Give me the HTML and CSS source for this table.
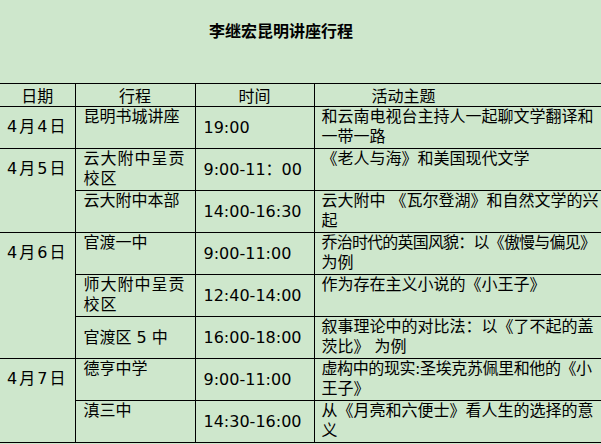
FILE: index.html
```html
<!DOCTYPE html>
<html lang="zh-CN">
<head>
<meta charset="utf-8">
<title>李继宏昆明讲座行程</title>
<link rel="stylesheet" href="styles.css">
</head>
<body>
<div class="page">
  <div class="title">李继宏昆明讲座行程</div>
  <table class="sched">
    <colgroup>
      <col class="c-date">
      <col class="c-place">
      <col class="c-time">
      <col class="c-topic">
    </colgroup>
    <tr class="head">
      <td class="h">日期</td>
      <td class="h">行程</td>
      <td class="h">时间</td>
      <td class="h h-topic">活动主题</td>
    </tr>
    <tr class="row">
      <td class="date"><div class="date-in">4月4日</div></td>
      <td class="place">昆明书城讲座</td>
      <td class="time">19:00</td>
      <td class="topic">和云南电视台主持人一起聊文学翻译和<br>一带一路</td>
    </tr>
    <tr class="row">
      <td class="date" rowspan="2"><div class="date-in">4月5日</div></td>
      <td class="place wide">云大附中呈贡<br>校区</td>
      <td class="time">9:00-11：00</td>
      <td class="topic">《老人与海》和美国现代文学</td>
    </tr>
    <tr class="row">
      <td class="place">云大附中本部</td>
      <td class="time">14:00-16:30</td>
      <td class="topic">云大附中 《瓦尔登湖》和自然文学的兴<br>起</td>
    </tr>
    <tr class="row">
      <td class="date" rowspan="3"><div class="date-in">4月6日</div></td>
      <td class="place">官渡一中</td>
      <td class="time">9:00-11:00</td>
      <td class="topic"><span class="tight">乔治时代的英国风貌：以《傲慢与偏见》</span><br>为例</td>
    </tr>
    <tr class="row">
      <td class="place wide">师大附中呈贡<br>校区</td>
      <td class="time">12:40-14:00</td>
      <td class="topic">作为存在主义小说的《小王子》</td>
    </tr>
    <tr class="row">
      <td class="place mid">官渡区 5 中</td>
      <td class="time">16:00-18:00</td>
      <td class="topic">叙事理论中的对比法：以《了不起的盖<br>茨比》 为例</td>
    </tr>
    <tr class="row">
      <td class="date" rowspan="2"><div class="date-in">4月7日</div></td>
      <td class="place">德亨中学</td>
      <td class="time">9:00-11:00</td>
      <td class="topic"><span class="snug">虚构中的现实:圣埃克苏佩里和他的《小</span><br>王子》</td>
    </tr>
    <tr class="row">
      <td class="place">滇三中</td>
      <td class="time">14:30-16:00</td>
      <td class="topic">从《月亮和六便士》看人生的选择的意<br>义</td>
    </tr>
  </table>
</div>
</body>
</html>
```

FILE: styles.css
```css
html, body {
  margin: 0;
  padding: 0;
  background: #cee7cc;
}

body {
  font-family: "DejaVu Sans", "Noto Sans CJK SC", sans-serif;
  color: #000;
  font-size: 16px;
  line-height: 20px;
}

.page {
  width: 601px;
  height: 444px;
  overflow: hidden;
}

.title {
  height: 83px;
  box-sizing: border-box;
  padding: 20px 0 0 209px;
  font-family: "Noto Sans CJK SC", sans-serif;
  font-weight: bold;
  font-size: 16px;
  line-height: 20px;
}

.sched {
  border-collapse: collapse;
  table-layout: fixed;
  width: 601px;
}

.c-date { width: 75px; }
.c-place { width: 120px; }
.c-time { width: 119px; }
.c-topic { width: 287px; }

.sched td {
  border: 1px solid #000;
  padding: 0 7px;
  white-space: nowrap;
  overflow: hidden;
}

.sched td:first-child { border-left: none; }
.sched td:last-child { border-right: none; }

.head td { height: 22px; }
.row td { height: 41px; }

.h {
  text-align: center;
  vertical-align: middle;
  font-family: "Noto Sans CJK SC", sans-serif;
}

.h-topic {
  text-align: left;
  padding-left: 57px !important;
}

.date {
  text-align: center;
  vertical-align: top;
  letter-spacing: 2px;
}

.date-in {
  margin-top: 10px;
}

.place {
  vertical-align: top;
  padding-left: 8px !important;
}

.place.wide { letter-spacing: 1px; }

.place.mid { vertical-align: middle; }

.time {
  vertical-align: middle;
  padding-left: 8px !important;
}

.topic {
  vertical-align: top;
  padding-left: 7px !important;
  padding-right: 0 !important;
}

.tight { letter-spacing: -0.8px; }
.snug { letter-spacing: -0.4px; }
```
